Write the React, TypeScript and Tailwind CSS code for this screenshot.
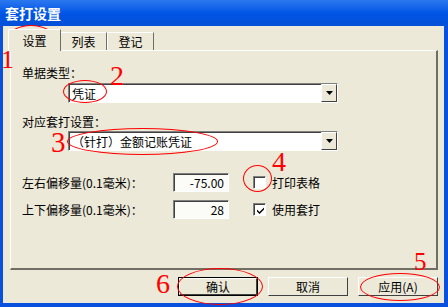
import React from "react";

const font = { fontFamily: '"Noto Sans CJK SC", "Noto Sans", sans-serif' };

function Combo({ text }: { text: string }) {
    return (
        <div className="ml-[46px] w-[270px] h-[20px] border-t border-l border-[#808080] border-b border-r border-b-white border-r-white bg-white flex">
            <div className="flex-1 flex items-center pl-[2px] text-[12px] leading-[14px] border-t border-l border-[#404040]">{text}</div>
            <div className="w-[16px] h-full border-t border-l border-white border-b border-r border-b-[#404040] border-r-[#404040] bg-[#ECE9D8] flex items-center justify-center">
                <svg width="7" height="4" viewBox="0 0 7 4"><path d="M0 0h7L3.5 4z" fill="#000" /></svg>
            </div>
        </div>
    );
}

function Edit({ value }: { value: string }) {
    return (
        <div className="w-[56px] h-[19px] border-t border-l border-[#808080] border-b border-r border-b-white border-r-white">
            <div className="h-full border-t border-l border-[#404040] bg-[#FBFBF8] flex items-center justify-end pr-[4px] text-[12px] leading-[14px]">{value}</div>
        </div>
    );
}

function Check({ checked, label }: { checked?: boolean; label: string }) {
    return (
        <div className="flex items-center gap-[6px]">
            <div className="w-[13px] h-[13px] border-t border-l border-[#808080] border-b border-r border-b-white border-r-white">
                <div className="w-full h-full border-t border-l border-[#404040] bg-white flex items-center justify-center">
                    {checked && (
                        <svg width="7" height="7" viewBox="0 0 7 7"><path d="M0 2.5l2.5 2.5L7 0.5v2L2.5 7 0 4.5z" fill="#000" /></svg>
                    )}
                </div>
            </div>
            <span className="text-[12px] leading-[14px]">{label}</span>
        </div>
    );
}

function Button({ label, isDefault }: { label: string; isDefault?: boolean }) {
    return (
        <div className={`w-[80px] h-[19px] ${isDefault ? "border border-black" : ""}`}>
            <div className="h-full border-t border-l border-white border-b border-r border-b-[#404040] border-r-[#404040] bg-[#ECE9D8] flex items-center justify-center text-[12px] leading-[14px]">
                {label}
            </div>
        </div>
    );
}

// red hand-drawn annotations lying over the dialog
function Mark({ n, left, top, size }: { n: string; left: number; top: number; size: number }) {
    return (
        <div className="absolute text-[#FF0000] leading-[22px]" style={{ left, top, fontSize: size, fontFamily: '"Liberation Serif", serif' }}>{n}</div>
    );
}

function Ring({ left, top, w, h }: { left: number; top: number; w: number; h: number }) {
    return <div className="absolute border-[1.5px] border-[#FF0000] rounded-[50%]" style={{ left, top, width: w, height: h }} />;
}

export default function App() {
    return (
        <div className="relative w-[448px] h-[307px] overflow-hidden bg-[#0A50DE] flex flex-col text-black" style={font}>
            <div className="h-[26px] shrink-0 bg-gradient-to-b from-[#2B78F0] via-[#0055E5] to-[#0450D8] flex items-center pl-[5px]">
                <span className="text-white font-bold text-[14px] leading-[16px]">套打设置</span>
            </div>
            <div className="flex-1 ml-[3px] mr-[4px] mb-[4px] bg-[#ECE9D8] flex flex-col">
                <div className="flex items-end h-[24px] ml-[5px]">
                    <div className="w-[53px] h-[22px] border-t border-l border-white border-r border-r-[#716F64] flex items-center justify-center text-[12px] leading-[14px] relative top-[1px] bg-[#ECE9D8] z-10">设置</div>
                    <div className="w-[46px] h-[18px] border-t border-white border-r border-r-[#716F64] flex items-center justify-center text-[12px] leading-[14px]">列表</div>
                    <div className="w-[47px] h-[18px] border-t border-l border-white border-r border-r-[#716F64] flex items-center justify-center text-[12px] leading-[14px]">登记</div>
                </div>
                <div className="ml-[7px] w-[428px] h-[220px] border-t border-l border-white border-r-2 border-b-2 border-r-[#716F64] border-b-[#716F64] flex flex-col pl-[11px] text-[12px] leading-[14px]">
                    <div className="mt-[15px]">单据类型：</div>
                    <div className="mt-[3px]"><Combo text="凭证" /></div>
                    <div className="mt-[12px]">对应套打设置：</div>
                    <div className="mt-[2px]"><Combo text="（针打）金额记账凭证" /></div>
                    <div className="mt-[22px] flex items-center">
                        <span className="w-[151px]">左右偏移量(0.1毫米)：</span>
                        <Edit value="-75.00" />
                        <div className="ml-[24px]"><Check label="打印表格" /></div>
                    </div>
                    <div className="mt-[8px] flex items-center">
                        <span className="w-[151px]">上下偏移量(0.1毫米)：</span>
                        <Edit value="28" />
                        <div className="ml-[24px]"><Check checked label="使用套打" /></div>
                    </div>
                </div>
                <div className="mt-[7px] flex justify-end gap-[10px] pr-[6px]">
                    <Button label="确认" isDefault />
                    <Button label="取消" />
                    <Button label="应用(A)" />
                </div>
            </div>

            <Ring left={8} top={25} w={46} h={26} />
            <Ring left={63} top={80} w={44} h={23} />
            <Ring left={67} top={128} w={151} h={27} />
            <Ring left={243} top={165} w={29} h={27} />
            <Ring left={360} top={273} w={80} h={28} />
            <Ring left={177} top={268} w={86} h={37} />
            <Mark n="1" left={1} top={49} size={26} />
            <Mark n="2" left={110} top={65} size={28} />
            <Mark n="3" left={51} top={131} size={29} />
            <Mark n="4" left={272} top={151} size={28} />
            <Mark n="5" left={414} top={251} size={25} />
            <Mark n="6" left={156} top={273} size={28} />
        </div>
    );
}
